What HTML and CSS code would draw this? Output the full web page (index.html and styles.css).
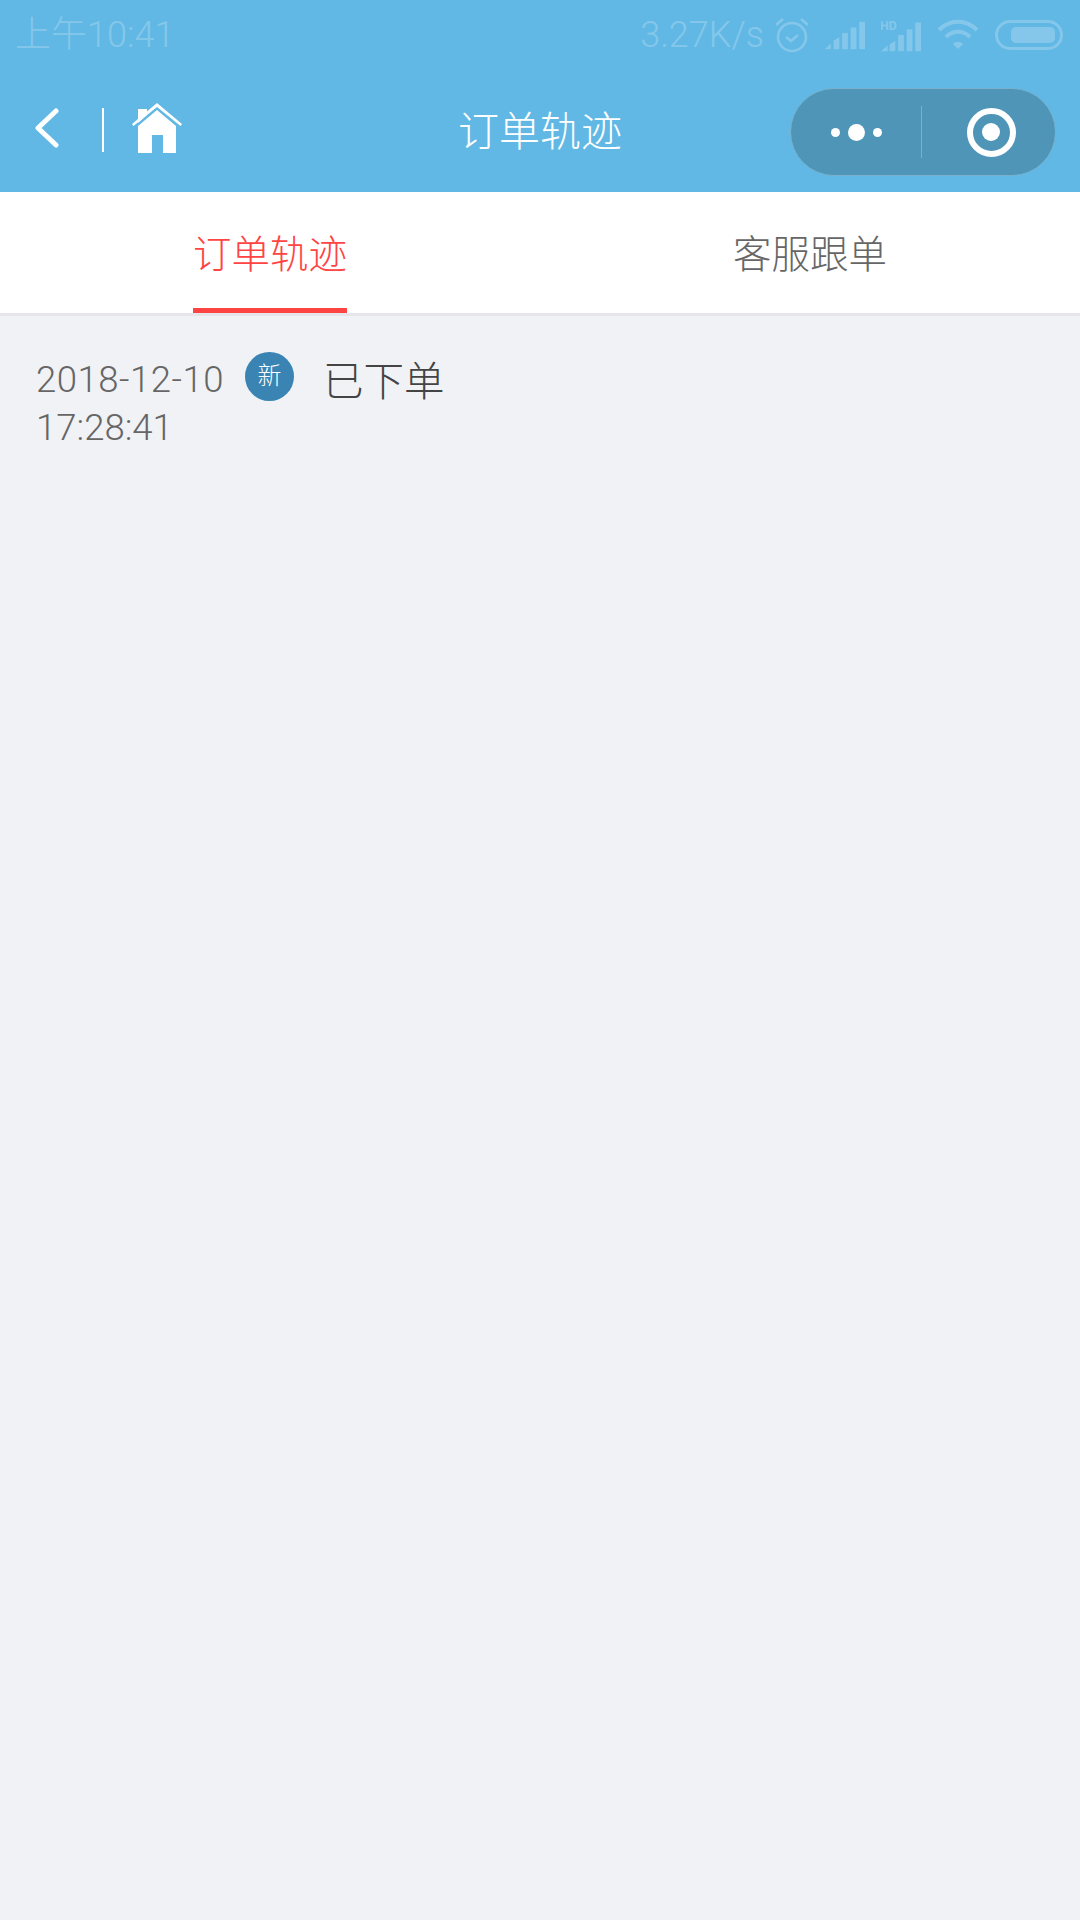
FILE: index.html
```html
<!DOCTYPE html>
<html lang="zh-CN">
<head>
    <meta charset="UTF-8">
    <meta name="viewport" content="width=device-width, initial-scale=1.0">
    <title>订单轨迹</title>
    <link rel="stylesheet" href="styles.css">
</head>
<body>
    <header class="top">
        <!-- status bar -->
        <div class="status">
            <span class="status-time">上午10:41</span>
            <div class="status-right">
                <span class="status-speed">3.27K/s</span>
                <svg class="ico" width="34" height="36" viewBox="0 0 34 36" fill="none" stroke="#fff" stroke-width="2.6">
                    <circle cx="17" cy="20" r="14"/>
                    <path d="M11 20l5 4 7-6M1 8l7-6M33 8l-7-6"/>
                </svg>
                <svg class="ico sig" width="40" height="30" viewBox="0 0 42 30" fill="#fff">
                    <path d="M0 30l6-6v6zM9 21l6-4v13H9zM18 13h6v17h-6zM27 7h6v23h-6zM36 1h6v29h-6z"/>
                </svg>
                <svg class="ico sig" width="40" height="34" viewBox="0 0 42 34" fill="#fff">
                    <path d="M0 34l7-6v6zM9 27l6-4v11H9zM18 17h6v17h-6zM27 11h6v23h-6zM36 4h6v30h-6z"/>
                    <text x="-1" y="12" class="hd">HD</text>
                </svg>
                <svg class="ico" width="42" height="32" viewBox="0 0 42 32" fill="none" stroke="#fff" stroke-width="4">
                    <path d="M2 11c11-11 27-11 38 0M9 18c7-7 17-7 24 0"/>
                    <path d="M16 25c3-3 7-3 10 0l-5 5z" fill="#fff" stroke="none"/>
                </svg>
                <div class="battery"><div class="battery-fill"></div></div>
            </div>
        </div>
        <!-- nav bar -->
        <nav class="nav">
            <div class="nav-left">
                <svg width="24" height="40" viewBox="0 0 24 40" fill="none" stroke="#fff" stroke-width="5" stroke-linecap="round" stroke-linejoin="round">
                    <path d="M21 3L3 20l18 17"/>
                </svg>
                <span class="nav-line"></span>
                <svg width="50" height="50" viewBox="0 0 50 50" fill="#fff">
                    <path d="M6 20v-14h9v6l-9 8z"/>
                    <path d="M25 0L50 21l-1.500 2L25 4 1.500 23 0 21z"/>
                    <path d="M25 7L6 23v27h14V32h11v18h13V23z"/>
                </svg>
            </div>
            <div class="nav-title">订单轨迹</div>
            <div class="capsule">
                <div class="capsule-dots">
                    <i class="dot"></i><i class="dot big"></i><i class="dot"></i>
                </div>
                <span class="capsule-line"></span>
                <div class="capsule-close"><i class="close-ring"><i class="close-core"></i></i></div>
            </div>
        </nav>
    </header>

    <div class="tabs">
        <div class="tab active"><span class="tab-text">订单轨迹</span></div>
        <div class="tab"><span class="tab-text">客服跟单</span></div>
    </div>

    <main class="list">
        <div class="row">
            <div class="row-time"><span class="row-date">2018-12-10</span><br>17:28:41</div>
            <div class="row-badge">新</div>
            <div class="row-title">已下单</div>
        </div>
    </main>
</body>
</html>
```

FILE: styles.css
```css
* {
    box-sizing: border-box;
}

body {
    margin: 0;
    width: 1080px;
    height: 1920px;
    overflow: hidden;
    background-color: #f1f2f5;
    font-family: Roboto, "Noto Sans CJK SC", sans-serif;
}

.top {
    height: 192px;
    background-color: #61b8e5;
    color: white;
}

.status {
    height: 70px;
    padding: 14px 17px 0 15px;
    display: flex;
    justify-content: space-between;
    align-items: flex-start;
    opacity: 0.22;
}

.status-time {
    font-size: 36px;
    line-height: 42px;
    font-weight: 300;
}

.status-right {
    display: flex;
    align-items: center;
    gap: 16px;
    height: 42px;
}

.status-speed {
    font-size: 36px;
    line-height: 42px;
    font-weight: 300;
    margin-right: -5px;
}

.ico {
    display: block;
}

.hd {
    font-size: 13px;
    font-weight: 700;
    fill: white;
}

.battery {
    width: 68px;
    height: 30px;
    border: 3px solid white;
    border-radius: 15px;
    padding: 4px 5px 4px 13px;
}

.battery-fill {
    height: 100%;
    background-color: white;
    border-radius: 5px;
}

.nav {
    height: 122px;
    padding: 18px 24px 16px 35px;
    display: flex;
    align-items: center;
    position: relative;
}

.nav-left {
    display: flex;
    align-items: center;
    margin-bottom: 8px;
}

.nav-line {
    width: 2px;
    height: 44px;
    margin: 3px 28px 0 43px;
    background-color: white;
}

.nav-title {
    position: absolute;
    left: 0;
    right: 0;
    top: 28px;
    text-align: center;
    font-size: 41px;
    font-weight: 300;
}

.capsule {
    margin-left: auto;
    width: 266px;
    height: 88px;
    display: flex;
    align-items: center;
    background-color: #4e95b8;
    border: 1px solid #77b1cf;
    border-radius: 44px;
}

.capsule-dots {
    flex: 1;
    display: flex;
    justify-content: center;
    align-items: center;
    gap: 8px;
}

.dot {
    width: 9px;
    height: 9px;
    border-radius: 50%;
    background-color: white;
}

.dot.big {
    width: 17px;
    height: 17px;
}

.capsule-line {
    width: 1px;
    height: 52px;
    background-color: #77b1cf;
}

.capsule-close {
    width: 133px;
    padding-left: 5px;
    display: flex;
    justify-content: center;
}

.close-ring {
    width: 49px;
    height: 49px;
    border: 6px solid white;
    border-radius: 50%;
    display: flex;
    align-items: center;
    justify-content: center;
}

.close-core {
    width: 18px;
    height: 18px;
    border-radius: 50%;
    background-color: white;
}

.tabs {
    height: 124px;
    display: flex;
    background-color: white;
    border-bottom: 3px solid #e6e6ea;
}

.tab {
    flex: 1;
    display: flex;
    justify-content: center;
    font-size: 38.500px;
    color: #666;
    font-weight: 300;
}

.tab-text {
    display: block;
    width: 154px;
    height: 121px;
    line-height: 126px;
    text-align: center;
    white-space: nowrap;
}

.tab.active {
    color: #ff4444;
}

.tab.active .tab-text {
    border-bottom: 5px solid #ff4444;
}

.list {
    padding: 36px 36px 0;
}

.row {
    display: flex;
    align-items: flex-start;
}

.row-time {
    width: 209px;
    padding-top: 4px;
    font-size: 36.500px;
    line-height: 48px;
    font-weight: 300;
    color: #666;
}

.row-date {
    letter-spacing: 0.5px;
}

.row-badge {
    width: 49px;
    height: 49px;
    margin-right: 29px;
    border-radius: 50%;
    background-color: #3a84b3;
    color: white;
    font-size: 24px;
    font-weight: 300;
    line-height: 49px;
    text-align: center;
}

.row-title {
    font-size: 40.500px;
    line-height: 60px;
    font-weight: 300;
    color: #444;
}
```
